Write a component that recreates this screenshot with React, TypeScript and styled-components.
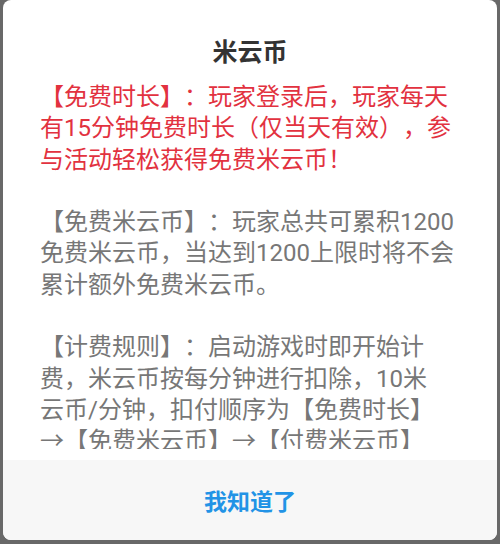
import React from "react";
import styled, { createGlobalStyle } from "styled-components";

const GlobalStyle = createGlobalStyle`
	html, body {
		margin: 0;
		padding: 0;
		background: #686868;
	}
	#root {
		height: 544px;
	}
`;

const Screen = styled.div`
	height: 544px;
	padding: 0 3px 4px 3px;
	box-sizing: border-box;
	font-family: "Noto Sans CJK SC", "Noto Sans", sans-serif;
`;

const Dialog = styled.div`
	display: flex;
	flex-direction: column;
	height: 100%;
	background: #ffffff;
	border-radius: 8px;
	overflow: hidden;
`;

const Title = styled.h1`
	margin: 0;
	padding-top: 30px;
	line-height: 40px;
	font-size: 25px;
	font-weight: bold;
	text-align: center;
	color: #333333;
`;

const Body = styled.div`
	flex: 1;
	min-height: 0;
	padding: 12px 37px 11px 37px;
	display: flex;
`;

const Scroll = styled.div`
	flex: 1;
	overflow: hidden;
`;

const Paragraph = styled.p<{ $tone: "red" | "gray" }>`
	margin: 0 0 31.3px 0;
	font-family: Roboto, "Noto Sans CJK SC", sans-serif;
	font-size: 24px;
	line-height: 31.3px;
	text-spacing-trim: space-all;
	color: ${(p) => (p.$tone === "red" ? "#e2323f" : "#777777")};
`;

const Line = styled.span`
	display: block;
	white-space: nowrap;
`;

const Footer = styled.div`
	height: 80px;
	flex-shrink: 0;
	background: #f7f7f7;
	display: flex;
	align-items: center;
	justify-content: center;
`;

const OkButton = styled.button`
	border: none;
	background: transparent;
	padding: 0;
	font-family: inherit;
	font-size: 23px;
	font-weight: bold;
	color: #2293e6;
	cursor: pointer;
`;

const paragraphs: { tone: "red" | "gray"; lines: string[] }[] = [
	{
		tone: "red",
		lines: [
			"【免费时长】：玩家登录后，玩家每天",
			"有15分钟免费时长（仅当天有效），参",
			"与活动轻松获得免费米云币！",
		],
	},
	{
		tone: "gray",
		lines: [
			"【免费米云币】：玩家总共可累积1200",
			"免费米云币，当达到1200上限时将不会",
			"累计额外免费米云币。",
		],
	},
	{
		tone: "gray",
		lines: [
			"【计费规则】：启动游戏时即开始计",
			"费，米云币按每分钟进行扣除，10米",
			"云币/分钟，扣付顺序为【免费时长】",
			"→【免费米云币】→【付费米云币】",
		],
	},
];

export default function App() {
	return (
		<>
			<GlobalStyle />
			<Screen>
				<Dialog>
					<Title>米云币</Title>
					<Body>
						<Scroll>
							{paragraphs.map((para, i) => (
								<Paragraph key={i} $tone={para.tone}>
									{para.lines.map((line, j) => (
										<Line key={j}>{line}</Line>
									))}
								</Paragraph>
							))}
						</Scroll>
					</Body>
					<Footer>
						<OkButton>我知道了</OkButton>
					</Footer>
				</Dialog>
			</Screen>
		</>
	);
}
